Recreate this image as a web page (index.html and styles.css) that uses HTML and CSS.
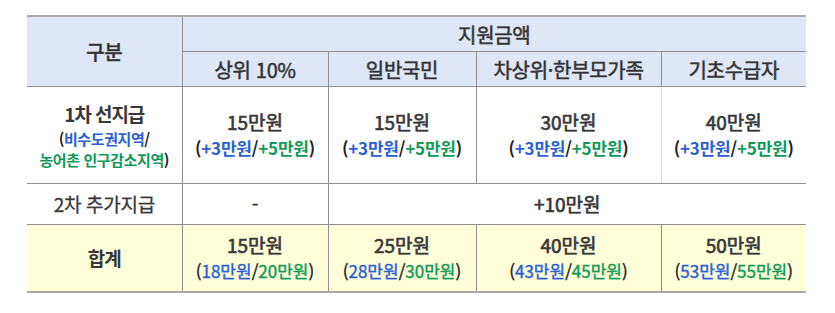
FILE: index.html
```html
<!DOCTYPE html>
<html lang="ko">
<head>
<meta charset="utf-8">
<link rel="stylesheet" href="styles.css">
</head>
<body>
<table class="tbl">
  <colgroup>
    <col class="c1"><col class="c2"><col class="c3"><col class="c4"><col class="c5">
  </colgroup>
  <thead>
    <tr class="h1">
      <th rowspan="2" class="head-main">구분</th>
      <th colspan="4">지원금액</th>
    </tr>
    <tr class="h2">
      <th>상위 10%</th>
      <th>일반국민</th>
      <th>차상위·한부모가족</th>
      <th>기초수급자</th>
    </tr>
  </thead>
  <tbody>
    <tr class="r1">
      <td class="label">
        <div class="main bold">1차 선지급</div>
        <div class="sub-left"><span class="par">(</span><span class="blue">비수도권지역</span>/</div>
        <div class="sub-left"><span class="green">농어촌 인구감소지역</span><span class="par">)</span></div>
      </td>
      <td><div class="main">15만원</div><div class="sub bold">(<span class="blue">+3만원</span>/<span class="green">+5만원</span>)</div></td>
      <td><div class="main">15만원</div><div class="sub bold">(<span class="blue">+3만원</span>/<span class="green">+5만원</span>)</div></td>
      <td class="light-r"><div class="main">30만원</div><div class="sub bold">(<span class="blue">+3만원</span>/<span class="green">+5만원</span>)</div></td>
      <td><div class="main">40만원</div><div class="sub bold">(<span class="blue">+3만원</span>/<span class="green">+5만원</span>)</div></td>
    </tr>
    <tr class="r2">
      <td class="label"><div class="main med">2차 추가지급</div></td>
      <td><div class="main med">-</div></td>
      <td colspan="3"><div class="main">+10만원</div></td>
    </tr>
    <tr class="r3">
      <td class="label"><div class="main bold">합계</div></td>
      <td><div class="main">15만원</div><div class="sub">(<span class="blue">18만원</span>/<span class="green">20만원</span>)</div></td>
      <td><div class="main">25만원</div><div class="sub">(<span class="blue">28만원</span>/<span class="green">30만원</span>)</div></td>
      <td><div class="main">40만원</div><div class="sub">(<span class="blue">43만원</span>/<span class="green">45만원</span>)</div></td>
      <td><div class="main">50만원</div><div class="sub">(<span class="blue">53만원</span>/<span class="green">55만원</span>)</div></td>
    </tr>
  </tbody>
</table>
</body>
</html>
```
FILE: styles.css
```css
html, body {
  margin: 0;
  padding: 0;
  background: #ffffff;
}
body {
  font-family: "Noto Sans CJK KR", "Noto Sans", sans-serif;
  color: #333333;
}
.tbl {
  margin: 15px 0 0 27px;
  border-collapse: collapse;
  table-layout: fixed;
  width: 779px;
  border-top: 2px solid #aaaaaa;
  border-bottom: 2px solid #aaaaaa;
}
.c1 { width: 155px; }
.c2 { width: 146px; }
.c3 { width: 148px; }
.c4 { width: 185px; }
.c5 { width: 145px; }
.tbl th, .tbl td {
  padding: 0;
  text-align: center;
  vertical-align: middle;
  border: 1px solid #8f8f8f;
}
.tbl tr > :first-child { border-left: none; }
.tbl tr > :last-child { border-right: none; }
.tbl th {
  background: #dfe6f6;
  font-weight: 400;
  font-size: 20px;
  letter-spacing: -0.3px;
  -webkit-text-stroke: 0.5px #333333;
  color: #333333;
}
.tbl th.head-main {
  -webkit-text-stroke: 0.7px #333333;
}
.h1 th { height: 34px; }
.h2 th { height: 34px; }
.r1 td { height: 96px; }
.r2 td { height: 40px; }
.r3 td { height: 66px; background: #ffffd9; }
.tbl td.light-r { border-right-color: #dddddd; }
.main {
  font-size: 19px;
  font-weight: 400;
  -webkit-text-stroke: 0.65px #383838;
  line-height: 26px;
  letter-spacing: 0;
  color: #383838;
}
.main.med {
  -webkit-text-stroke: 0.3px #383838;
  letter-spacing: -0.3px;
}
.main.bold {
  font-weight: 700;
  -webkit-text-stroke: 0;
}
.label .main.bold { line-height: 28px; letter-spacing: -1.1px; }
.sub {
  font-size: 17px;
  font-weight: 400;
  -webkit-text-stroke: 0.4px currentColor;
  line-height: 26px;
  letter-spacing: 0;
  color: #222222;
}
.sub.bold {
  font-weight: 700;
  -webkit-text-stroke: 0;
  letter-spacing: -0.2px;
}
.sub-left {
  font-size: 15px;
  font-weight: 700;
  line-height: 21px;
  letter-spacing: -0.4px;
  color: #222222;
}
.blue { color: #2a60d6; }
.green { color: #0f9a57; }
.par { color: #222222; }
```
